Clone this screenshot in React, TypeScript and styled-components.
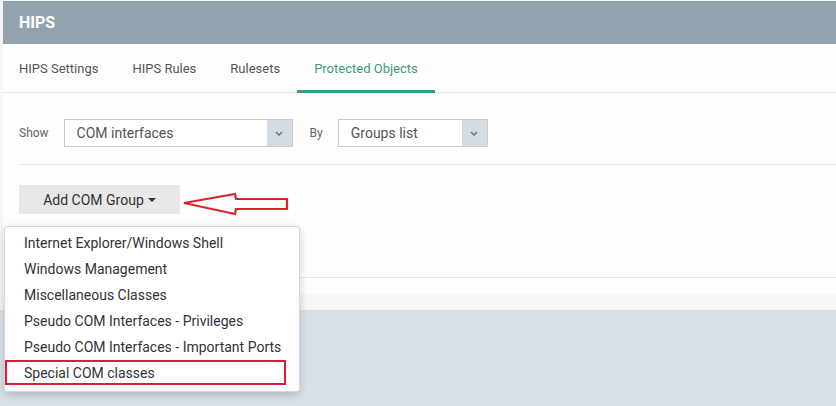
import React from "react";
import styled, { createGlobalStyle } from "styled-components";

const Global = createGlobalStyle`
  html, body { margin: 0; padding: 0; }
  body {
    background: #d8e0e7;
    font-family: Roboto, "Noto Sans", "Liberation Sans", sans-serif;
    width: 836px;
    height: 406px;
    overflow: hidden;
  }
`;

const Shell = styled.div`
  position: relative;
  width: 836px;
  height: 406px;
  padding: 1px 0 0 3px;
  box-sizing: border-box;
  background: linear-gradient(#f4f6f8 0, #f4f6f8 310px, #d8e0e7 310px);
`;

const Panel = styled.div`
  background: #fdfdfd;
  display: flex;
  flex-direction: column;
`;

const Header = styled.div`
  height: 43px;
  background: #93a3ad;
  display: flex;
  align-items: center;
  padding-left: 16px;
  color: #fff;
  font-weight: 700;
  font-size: 16px;
`;

const Tabs = styled.div`
  height: 48px;
  display: flex;
  margin-left: -1px;
  border-bottom: 1px solid #e4e6e8;
`;

const Tab = styled.div<{ $active?: boolean }>`
  padding: 0 17px;
  display: flex;
  align-items: center;
  font-size: 13px;
  color: ${(p) => (p.$active ? "#3c9a80" : "#555")};
  border-bottom: 3px solid ${(p) => (p.$active ? "#3c9a80" : "transparent")};
  box-sizing: border-box;
  margin-bottom: -1px;
  padding-top: 3px;
`;

const FilterRow = styled.div`
  height: 72px;
  box-sizing: border-box;
  padding-top: 26px;
  margin-left: 16px;
  display: flex;
  align-items: flex-start;
  border-bottom: 1px solid #e4e6e8;
`;

const Label = styled.span`
  font-size: 12px;
  line-height: 28px;
  color: #666;
  margin-right: 15px;
`;

const Select = styled.div<{ $w: number }>`
  width: ${(p) => p.$w}px;
  height: 28px;
  box-sizing: border-box;
  border: 1px solid #ccc;
  background: #fff;
  display: flex;
  align-items: center;
  justify-content: space-between;
  margin-right: 17px;
`;

const SelectText = styled.span`
  font-size: 14px;
  color: #555;
  padding-left: 12px;
`;

const Chevron = styled.span`
  width: 25px;
  height: 26px;
  background: #d4dbe1;
  display: flex;
  align-items: center;
  justify-content: center;
`;

const ActionArea = styled.div`
  height: 113px;
  margin-left: 16px;
  padding-top: 20px;
  box-sizing: border-box;
  display: flex;
  align-items: flex-start;
  border-bottom: 1px solid #e4e6e8;
`;

const Button = styled.div`
  width: 161px;
  height: 29px;
  background: #e8e8e8;
  color: #333;
  font-size: 14px;
  display: flex;
  align-items: center;
  justify-content: center;
  gap: 4px;
`;

const Caret = styled.span`
  width: 0;
  height: 0;
  border-left: 4px solid transparent;
  border-right: 4px solid transparent;
  border-top: 4px solid #333;
  margin-top: 1px;
`;

const ArrowWrap = styled.div`
  margin-left: 2px;
  margin-top: 7px;
`;

const BottomStrip = styled.div`
  height: 16px;
  background: #fdfdfd;
`;

const Menu = styled.div`
  position: absolute;
  left: 4px;
  top: 226px;
  width: 296px;
  box-sizing: border-box;
  background: #fff;
  border: 1px solid #d6d6d6;
  border-radius: 3px;
  box-shadow: 0 3px 8px rgba(0, 0, 0, 0.18);
  padding: 3px 0 5px;
`;

const Item = styled.div`
  position: relative;
  height: 26px;
  line-height: 26px;
  padding-left: 19px;
  font-size: 14px;
  color: #333;
  white-space: nowrap;
`;

const Mark = styled.span`
  position: absolute;
  left: 0;
  top: 0;
  width: 281px;
  height: 25px;
  box-sizing: border-box;
  border: 2px solid #d42030;
`;

const ChevronIcon = () => (
  <svg width="10" height="7" viewBox="0 0 10 7">
    <path d="M2 2 L5 5 L8 2" stroke="#707b84" strokeWidth="1.6" fill="none" />
  </svg>
);

const Arrow = () => (
  <svg width="108" height="24" viewBox="0 0 108 24">
    <path
      d="M2 11 L53 2 L54 7 L105 7 L105 17 L54 17 L53 22 Z"
      fill="none"
      stroke="#d6262c"
      strokeWidth="2.2"
      strokeLinejoin="miter"
    />
  </svg>
);

const items = [
  "Internet Explorer/Windows Shell",
  "Windows Management",
  "Miscellaneous Classes",
  "Pseudo COM Interfaces - Privileges",
  "Pseudo COM Interfaces - Important Ports",
  "Special COM classes",
];

export default function App() {
  return (
    <>
      <Global />
      <Shell>
        <Panel>
          <Header>HIPS</Header>
          <Tabs>
            <Tab>HIPS Settings</Tab>
            <Tab>HIPS Rules</Tab>
            <Tab>Rulesets</Tab>
            <Tab $active>Protected Objects</Tab>
          </Tabs>
          <FilterRow>
            <Label>Show</Label>
            <Select $w={229}>
              <SelectText>COM interfaces</SelectText>
              <Chevron>
                <ChevronIcon />
              </Chevron>
            </Select>
            <Label>By</Label>
            <Select $w={150}>
              <SelectText>Groups list</SelectText>
              <Chevron>
                <ChevronIcon />
              </Chevron>
            </Select>
          </FilterRow>
          <ActionArea>
            <Button>
              Add COM Group <Caret />
            </Button>
            <ArrowWrap>
              <Arrow />
            </ArrowWrap>
          </ActionArea>
          <BottomStrip />
        </Panel>
        <Menu>
          {items.map((t, i) => (
            <Item key={t}>
              {t}
              {i === items.length - 1 && <Mark />}
            </Item>
          ))}
        </Menu>
      </Shell>
    </>
  );
}
